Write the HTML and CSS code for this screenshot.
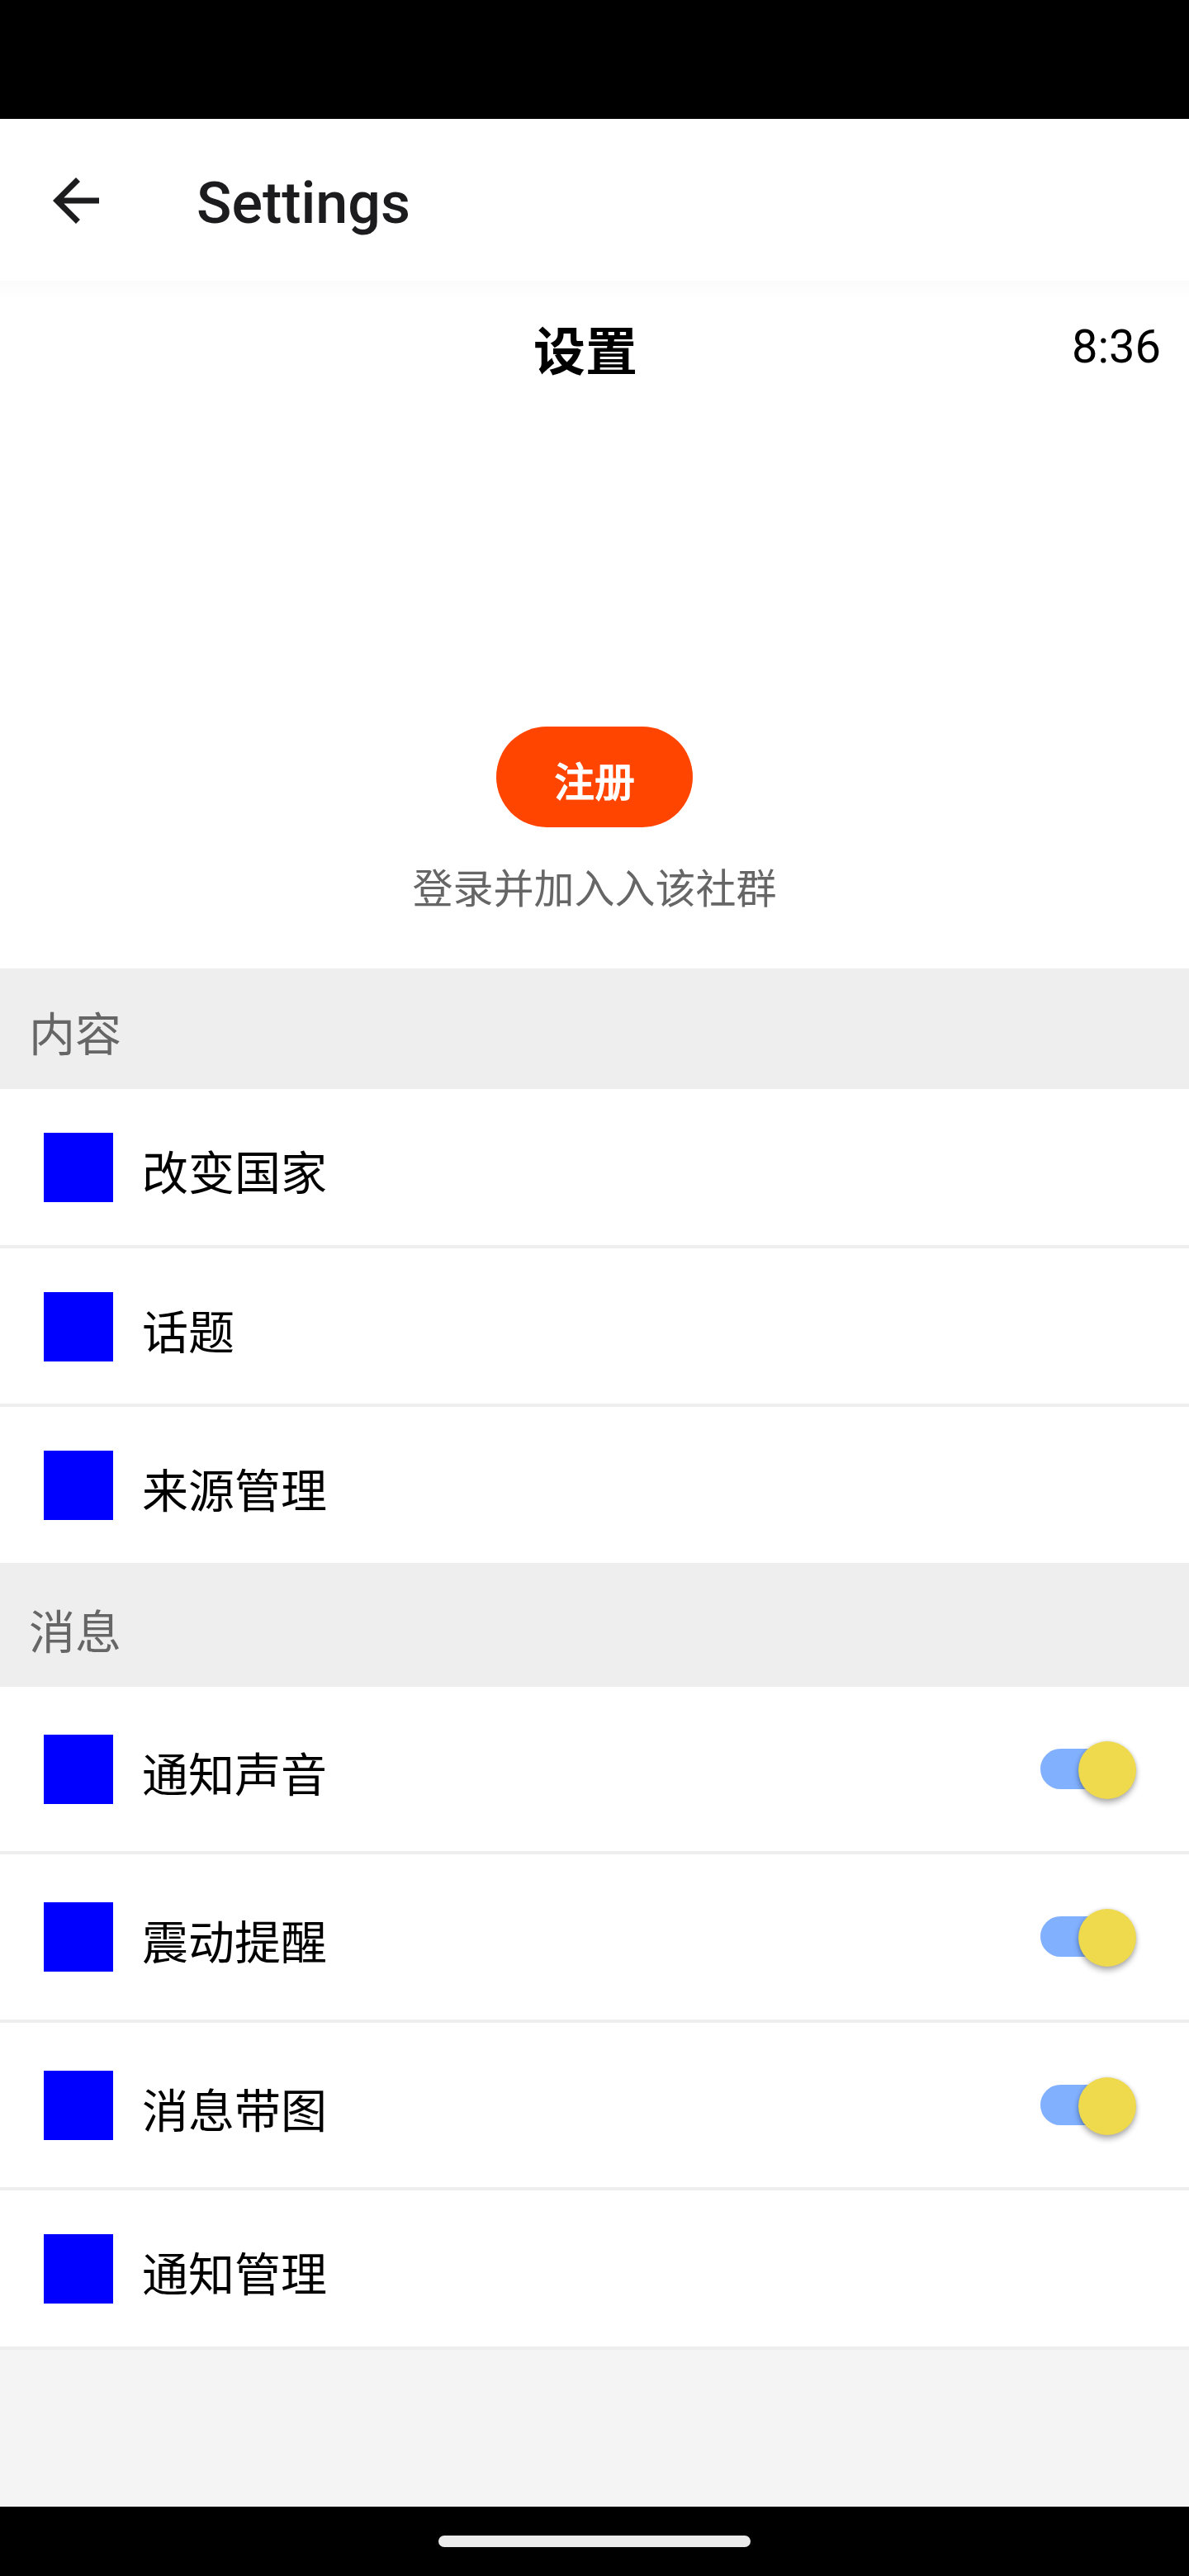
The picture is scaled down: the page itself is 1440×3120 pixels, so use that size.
FILE: index.html
```html
<!DOCTYPE html>
<html lang="zh-CN">
<head>
<meta charset="utf-8">
<title>Settings</title>
<link rel="stylesheet" href="styles.css">
</head>
<body>
<div class="screen">
  <div class="status-bar"></div>
  <header class="app-bar">
    <svg class="back" viewBox="0 0 24 24" aria-label="Back"><path d="M20 11H7.83l5.59-5.59L12 4l-8 8 8 8 1.41-1.41L7.83 13H20z"/></svg>
    <h1 class="app-title">Settings</h1>
  </header>
  <section class="account">
    <div class="top-line">
      <span></span>
      <h2 class="page-title">设置</h2>
      <span class="time">8:36</span>
    </div>
    <button class="signup">注册</button>
    <p class="hint">登录并加入入该社群</p>
  </section>
  <h3 class="group">内容</h3>
  <ul class="list">
    <li class="row"><i class="icon"></i><span class="label">改变国家</span></li>
    <li class="row short"><i class="icon"></i><span class="label">话题</span></li>
    <li class="row"><i class="icon"></i><span class="label">来源管理</span></li>
  </ul>
  <h3 class="group">消息</h3>
  <ul class="list">
    <li class="row tall"><i class="icon"></i><span class="label">通知声音</span><span class="switch"><i class="thumb"></i></span></li>
    <li class="row taller"><i class="icon"></i><span class="label">震动提醒</span><span class="switch"><i class="thumb"></i></span></li>
    <li class="row tall"><i class="icon"></i><span class="label">消息带图</span><span class="switch"><i class="thumb"></i></span></li>
    <li class="row"><i class="icon"></i><span class="label">通知管理</span></li>
  </ul>
  <div class="nav-bar"><div class="pill"></div></div>
</div>
</body>
</html>
```
FILE: styles.css
```css
* { box-sizing: border-box; margin: 0; padding: 0; }

body {
  width: 1440px;
  background: #f4f4f4;
  color: #000;
  font-family: "Noto Sans CJK SC", sans-serif;
}

.screen { display: flex; flex-direction: column; height: 3120px; }

.status-bar { height: 144px; background: #000; }

.app-bar {
  display: flex;
  align-items: center;
  height: 196px;
  padding-left: 50px;
  background: #fff;
}
.back { width: 84px; height: 84px; margin-top: 2px; fill: #1c1b1d; }
.app-title {
  margin-left: 104px;
  padding-top: 8px;
  font: 500 70px/84px Roboto, sans-serif;
  color: #1c1b1d;
}

.account {
  display: flex;
  flex-direction: column;
  align-items: center;
  height: 833px;
  background: linear-gradient(#fbfbfb, #fff 24px);
}
.top-line {
  display: grid;
  grid-template-columns: 646px 126px 1fr;
  width: 100%;
  height: 540px;
  padding: 34px 34px 0 0;
}
.page-title { font-size: 63px; line-height: 93px; font-weight: 700; }
.time { padding-top: 6px; text-align: right; font: 56px/80px Roboto, sans-serif; }

.signup {
  width: 238px;
  height: 122px;
  padding-top: 5px;
  border: 0;
  border-radius: 61px;
  background: #ff4500;
  color: #fff;
  font: 500 49px/72px "Noto Sans CJK SC", sans-serif;
  -webkit-text-stroke: 0.9px #fff;
}
.hint { margin-top: 35px; font-size: 49px; line-height: 72px; color: #666; }

.group {
  height: 146px;
  padding: 37px 0 0 35px;
  background: #eee;
  color: #666;
  font-size: 56px;
  font-weight: 400;
  line-height: 78px;
}

.list { list-style: none; }
.row {
  display: flex;
  align-items: flex-start;
  height: 193px;
  padding: 53px 68px 0 53px;
  border-bottom: 4px solid #eee;
  background: #fff;
}
.row.short { height: 192px; }
.row.tall { height: 203px; padding-top: 58px; }
.row.taller { height: 204px; padding-top: 58px; }
.icon { width: 84px; height: 84px; background: #00f; }
.label { margin: 5px 0 0 35px; font-size: 56px; line-height: 80px; }

.switch {
  display: flex;
  align-items: center;
  justify-content: flex-end;
  width: 112px;
  height: 49px;
  margin: 17px 0 0 auto;
  border-radius: 25px;
  background: #81b0ff;
}
.thumb {
  flex: none;
  width: 70px;
  height: 70px;
  margin: 2px -4px 0 0;
  border-radius: 50%;
  background: #efd94c;
  box-shadow: 0 5px 7px rgba(0, 0, 0, .28), 0 0 5px rgba(0, 0, 0, .14);
}

.nav-bar {
  display: flex;
  justify-content: center;
  height: 84px;
  margin-top: auto;
  padding-top: 35px;
  background: #000;
}
.pill { width: 378px; height: 14px; border-radius: 7px; background: #ebebeb; }
```
